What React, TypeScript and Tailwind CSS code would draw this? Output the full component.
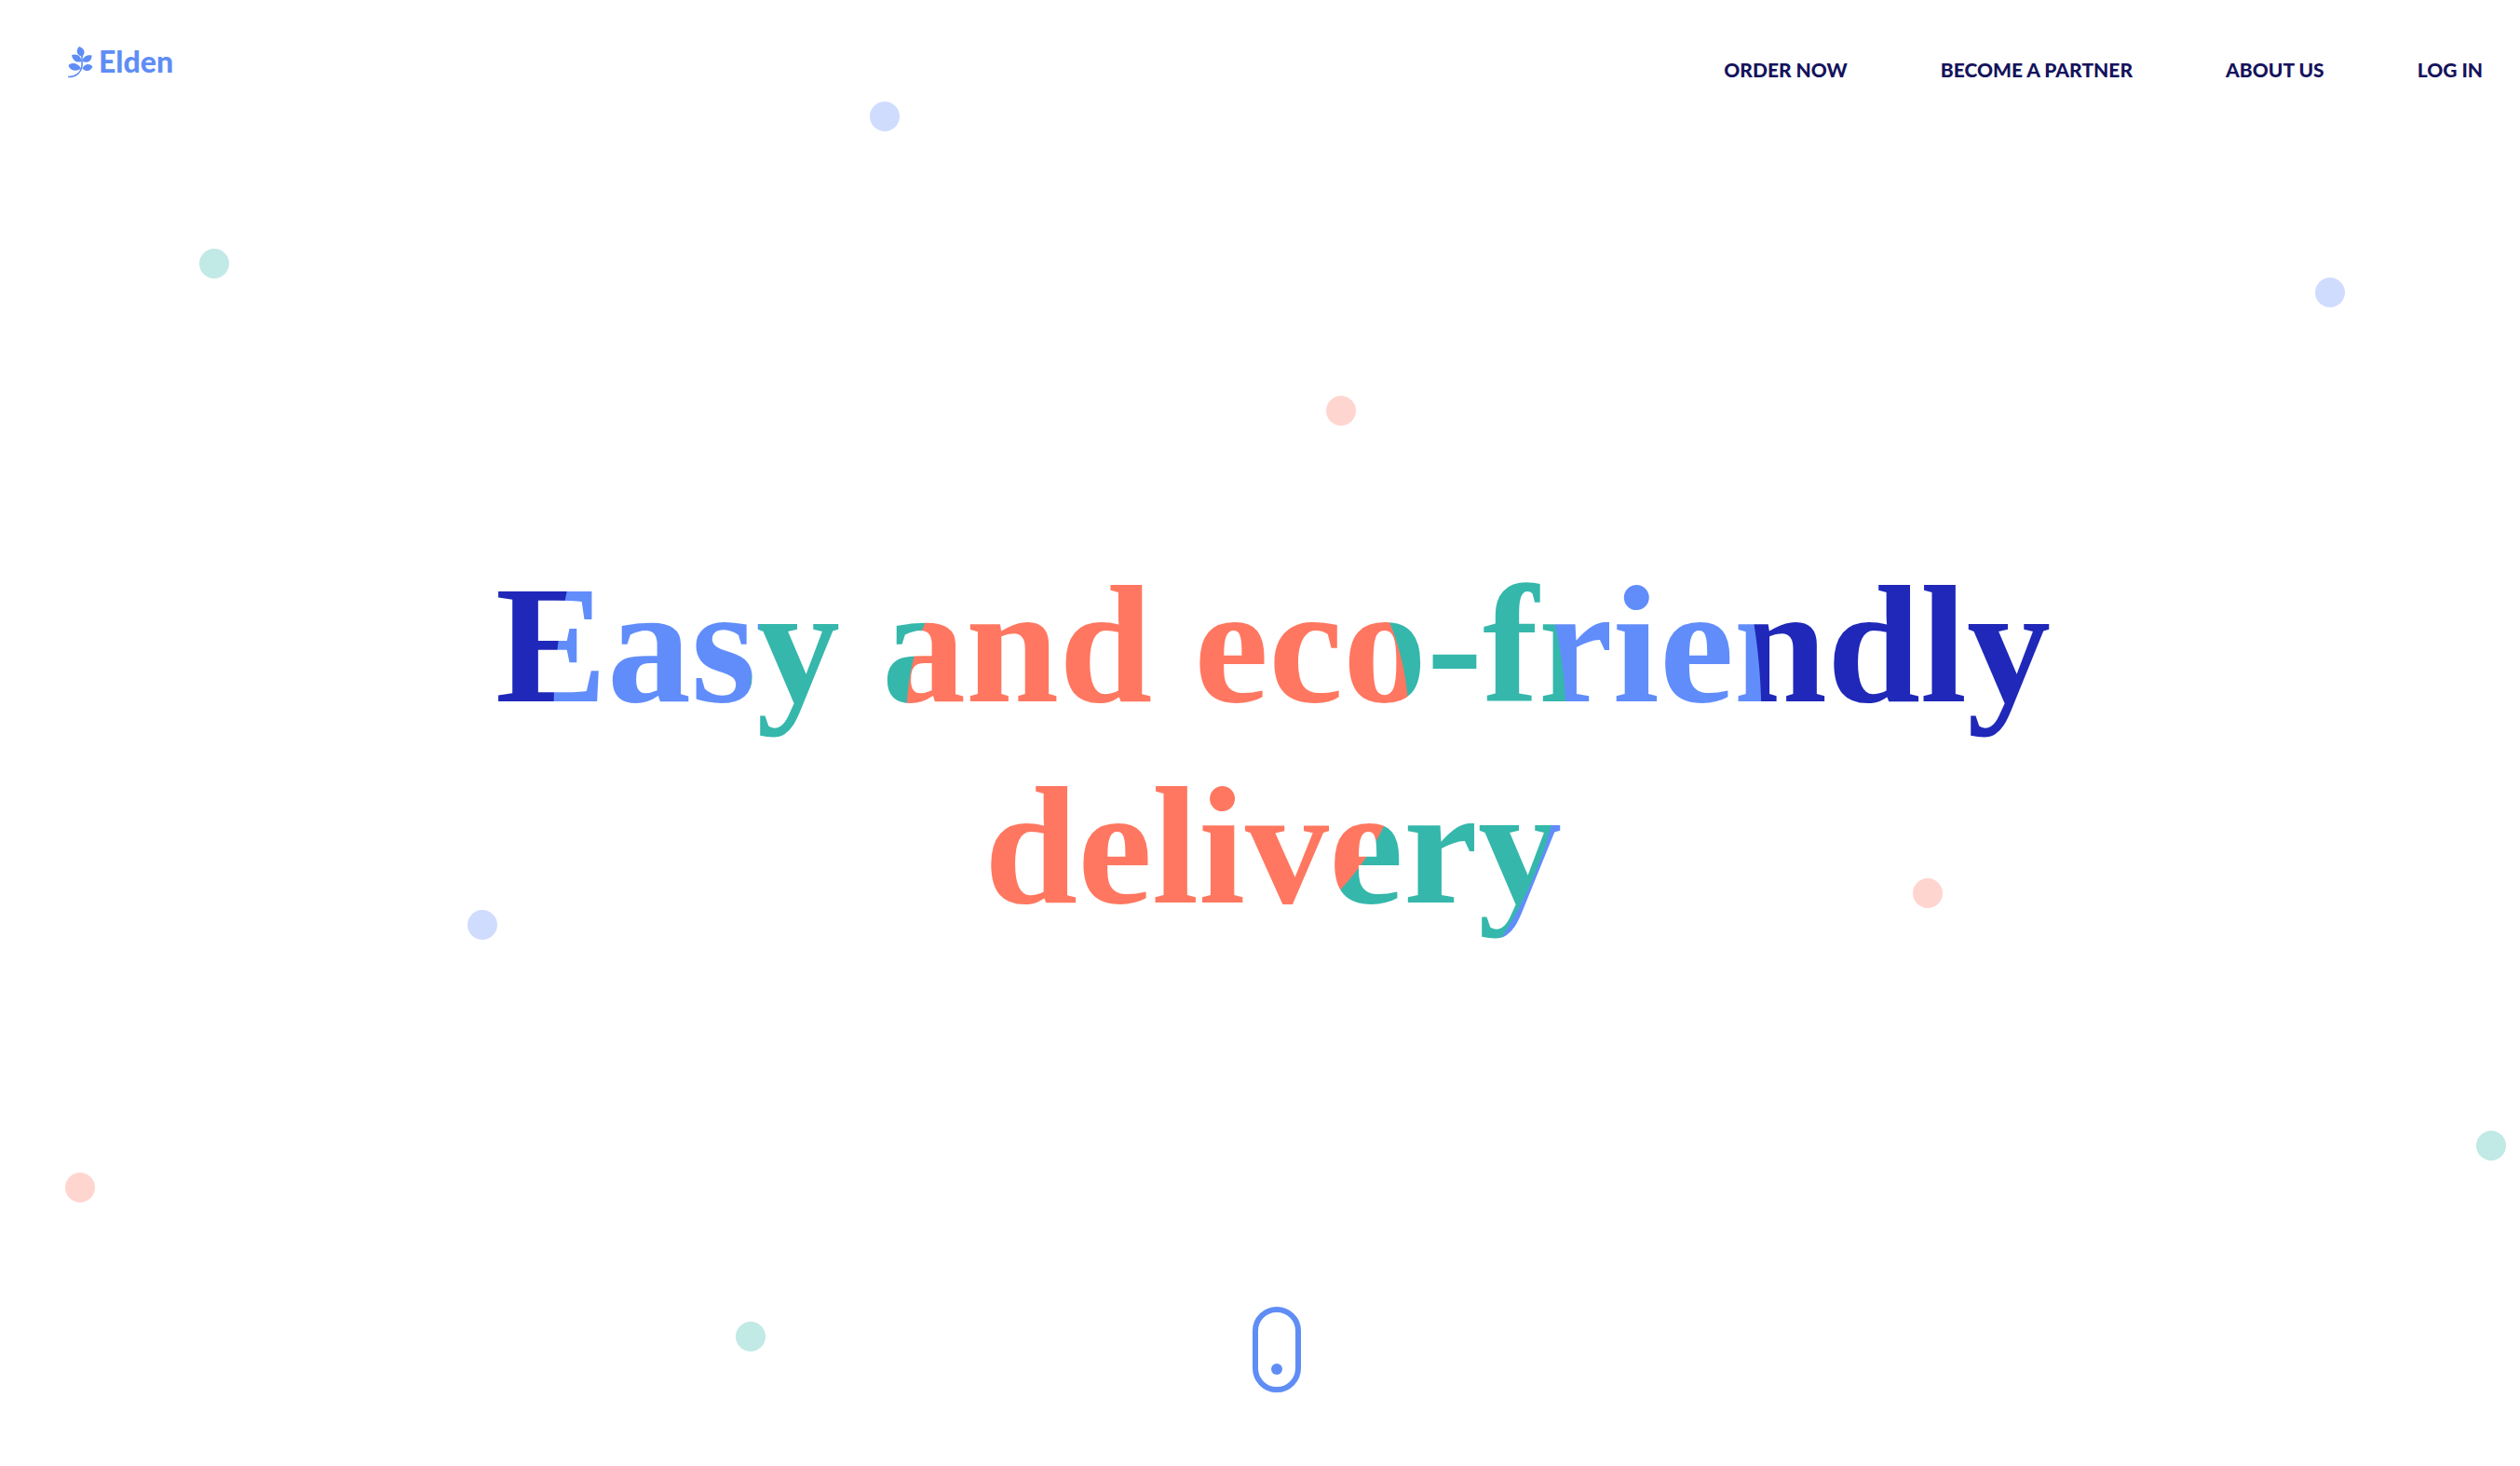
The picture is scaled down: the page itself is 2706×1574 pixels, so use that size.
const navLinks = ["ORDER NOW", "BECOME A PARTNER", "ABOUT US", "LOG IN"];

const dots = [
  "left-[934px] top-[109px] bg-[#d0dcfe]",
  "left-[214px] top-[267px] bg-[#c1e9e5]",
  "left-[2486px] top-[298px] bg-[#d0dcfe]",
  "left-[1424px] top-[425px] bg-[#ffd5cf]",
  "left-[2054px] top-[943px] bg-[#ffd5cf]",
  "left-[502px] top-[977px] bg-[#d0dcfe]",
  "left-[70px] top-[1259px] bg-[#ffd5cf]",
  "left-[2659px] top-[1214px] bg-[#c1e9e5]",
  "left-[790px] top-[1419px] bg-[#c1e9e5]",
];

function Sprig() {
  return (
    <svg viewBox="0 0 28 35" className="h-[35px] w-7" aria-hidden="true">
      <g fill="#5f8df5">
        <path d="M13 1 C18 3 21 7 16 12 C10 10 9 5 13 1Z" />
        <path d="M5 10 C11 8 15 11 15.5 17 C10 19 6 16 5 10Z" />
        <path d="M26.5 10.5 C27 16 22 19.5 16.5 17 C17 12 21 9.5 26.5 10.5Z" />
        <path d="M1.5 21 C6 17.5 12 19 15 24.5 C10 28.5 3 27 1.5 21Z" />
        <path d="M27.5 22.5 C25 28 20 28.5 16.5 24.5 C18.5 19.5 24 18.5 27.5 22.5Z" />
      </g>
      <path d="M16 11 V22 C15 29 9 34 1 33.5" fill="none" stroke="#5f8df5" strokeWidth="1.6" />
    </svg>
  );
}

export default function App() {
  return (
    <div className="relative flex min-h-screen flex-col overflow-hidden bg-white pl-9 font-[Lato,sans-serif]">
      {dots.map((dot) => (
        <span key={dot} aria-hidden="true" className={`absolute size-8 rounded-full ${dot}`} />
      ))}

      <header className="relative flex h-24 items-start justify-between pt-12 pr-10 pl-9">
        <a href="#home" className="flex items-center gap-1.5 text-[#5f8df5]">
          <Sprig />
          <span className="text-[32px] leading-9 font-black">Elden</span>
        </a>
        <nav className="flex gap-[100px] pt-3 text-[21px] leading-[30px] font-black text-[#14135c]">
          {navLinks.map((label) => (
            <a key={label} href="#home">
              {label}
            </a>
          ))}
        </nav>
      </header>

      <main className="relative flex flex-1 flex-col items-center">
        <h1 className="mt-[489px] w-full bg-[radial-gradient(circle_at_45.2%_43%,#ff7760_269px,#35b7ab_270px,#35b7ab_438px,#618dfb_439px,#618dfb_648px,#1f28b8_649px)] bg-clip-text pr-2 text-center font-['Liberation_Serif',serif] text-[180px] leading-[216px] font-bold text-transparent">
          Easy and eco-friendly
          <br />
          delivery
        </h1>
        <a
          href="#more"
          aria-label="Scroll down"
          className="mt-auto mb-[79px] flex h-[92px] w-[52px] items-end justify-center rounded-full border-6 border-[#5f8df5] pb-[13px]"
        >
          <span className="size-3 rounded-full bg-[#5f8df5]" />
        </a>
      </main>
    </div>
  );
}
